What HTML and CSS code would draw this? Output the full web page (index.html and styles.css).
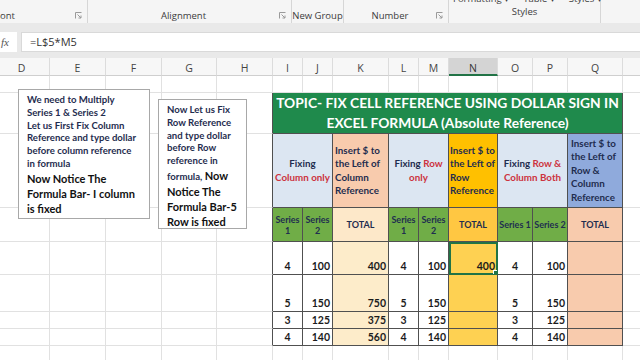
FILE: index.html
```html
<!DOCTYPE html>
<html lang="en">
<head>
    <meta charset="UTF-8">
    <title>Fix Cell Reference</title>
    <link rel="stylesheet" href="styles.css">
</head>
<body>
    <div class="ribbon">
        <div class="grp g-font"><span class="lbl left">ont</span><svg class="launch" viewBox="0 0 7 7"><path d="M0.5 6.5V0.5H6.5M2.5 2.5L6 6M6 3.5V6H3.5"/></svg></div>
        <div class="grp g-align"><span class="lbl">Alignment</span><svg class="launch" viewBox="0 0 7 7"><path d="M0.5 6.5V0.5H6.5M2.5 2.5L6 6M6 3.5V6H3.5"/></svg></div>
        <div class="grp g-new"><span class="lbl">New Group</span></div>
        <div class="grp g-num"><span class="lbl">Number</span><svg class="launch" viewBox="0 0 7 7"><path d="M0.5 6.5V0.5H6.5M2.5 2.5L6 6M6 3.5V6H3.5"/></svg></div>
        <div class="grp g-styles">
            <div class="peek"><span>Formatting ▾</span><span>Table ▾</span><span>Styles ▾</span></div>
            <span class="lbl">Styles</span>
        </div>
        <div class="grp g-last"></div>
    </div>

    <div class="fbar">
        <div class="fx">fx</div>
        <div class="finput">=L$5*M5</div>
    </div>

    <div class="sheet">
        <table class="grid">
            <colgroup>
                <col class="w56"><col class="w56"><col class="w56"><col class="w55"><col class="w56">
                <col class="w30"><col class="w30"><col class="w56"><col class="w30"><col class="w30">
                <col class="w49"><col class="w35"><col class="w35"><col class="w55"><col class="w40">
            </colgroup>
            <tr class="r-head">
                <th>D</th><th>E</th><th>F</th><th>G</th><th>H</th>
                <th>I</th><th>J</th><th>K</th><th>L</th><th>M</th>
                <th class="sel">N</th><th>O</th><th>P</th><th>Q</th><th></th>
            </tr>
            <tr class="r17">
                <td></td><td></td><td></td><td></td><td></td>
                <td></td><td></td><td></td><td></td><td></td>
                <td></td><td></td><td></td><td></td><td></td>
            </tr>
            <tr class="r-title">
                <td></td><td></td><td></td><td></td><td class="edge"></td>
                <td class="t title" colspan="9">TOPIC- FIX CELL REFERENCE USING DOLLAR SIGN IN<br>EXCEL FORMULA (Absolute Reference)</td>
                <td></td>
            </tr>
            <tr class="r-desc">
                <td></td><td></td><td></td><td></td><td class="edge"></td>
                <td class="t sky center" colspan="2">Fixing<br><span class="red">Column only</span></td>
                <td class="t peach">Insert $ to<br>the Left of<br>Column<br>Reference</td>
                <td class="t sky center" colspan="2">Fixing <span class="red">Row</span><br><span class="red">only</span></td>
                <td class="t orange">Insert $ to<br>the Left of<br>Row<br>Reference</td>
                <td class="t sky center" colspan="2">Fixing <span class="red">Row &amp;</span><br><span class="red">Column Both</span></td>
                <td class="t lav">Insert $ to<br>the Left of<br>Row &amp;<br>Column<br>Reference</td>
                <td></td>
            </tr>
            <tr class="r-sub">
                <td></td><td></td><td></td><td></td><td class="edge"></td>
                <td class="t leaf">Series<br>1</td><td class="t leaf">Series<br>2</td>
                <td class="t cream">TOTAL</td>
                <td class="t leaf">Series<br>1</td><td class="t leaf">Series<br>2</td>
                <td class="t amber">TOTAL</td>
                <td class="t leaf">Series 1</td><td class="t leaf">Series 2</td>
                <td class="t salmon">TOTAL</td>
                <td></td>
            </tr>
            <tr class="r33 num">
                <td></td><td></td><td></td><td></td><td class="edge"></td>
                <td class="t mid">4</td><td class="t">100</td><td class="t cream2">400</td>
                <td class="t mid">4</td><td class="t">100</td><td class="t amber2 active">400</td>
                <td class="t mid">4</td><td class="t">100</td><td class="t salmon"></td>
                <td></td>
            </tr>
            <tr class="r37 num">
                <td></td><td></td><td></td><td></td><td class="edge"></td>
                <td class="t mid">5</td><td class="t">150</td><td class="t cream2">750</td>
                <td class="t mid">5</td><td class="t">150</td><td class="t amber2"></td>
                <td class="t mid">5</td><td class="t">150</td><td class="t salmon"></td>
                <td></td>
            </tr>
            <tr class="r17 num">
                <td></td><td></td><td></td><td></td><td class="edge"></td>
                <td class="t mid">3</td><td class="t">125</td><td class="t cream2">375</td>
                <td class="t mid">3</td><td class="t">125</td><td class="t amber2"></td>
                <td class="t mid">3</td><td class="t">125</td><td class="t salmon"></td>
                <td></td>
            </tr>
            <tr class="r17 num">
                <td></td><td></td><td></td><td></td><td class="edge"></td>
                <td class="t mid">4</td><td class="t">140</td><td class="t cream2">560</td>
                <td class="t mid">4</td><td class="t">140</td><td class="t amber2"></td>
                <td class="t mid">4</td><td class="t">140</td><td class="t salmon"></td>
                <td></td>
            </tr>
            <tr class="r17">
                <td></td><td></td><td></td><td></td><td></td>
                <td></td><td></td><td></td><td></td><td></td>
                <td></td><td></td><td></td><td></td><td></td>
            </tr>
        </table>

        <div class="note note1">
            <p class="small">We need to Multiply<br>Series 1 &amp; Series 2<br>Let us First Fix Column<br>Reference and type dollar<br>before column reference<br>in formula</p>
            <p class="big">Now Notice The<br>Formula Bar- I column<br>is fixed</p>
        </div>
        <div class="note note2">
            <p class="small">Now Let us Fix<br>Row Reference<br>and type dollar<br>before Row<br>reference in<br>formula, <span class="big">Now</span></p>
            <p class="big">Notice The<br>Formula Bar-5<br>Row is fixed</p>
        </div>
    </div>
</body>
</html>
```

FILE: styles.css
```css
*{margin: 0;padding: 0;box-sizing: border-box;}
body {
    width: 640px;
    height: 360px;
    overflow: hidden;
    background: #fff;
    font-family: Lato, "Liberation Sans", sans-serif;
}

/* ribbon */
.ribbon {
    height: 23px;
    background: #f5f5f5;
    display: flex;
    overflow: hidden;
    font-family: "Open Sans", "Liberation Sans", sans-serif;
    font-size: 9.5px;
    color: #3c3c3c;
}
.grp {
    height: 23px;
    display: flex;
    align-items: flex-end;
    padding-bottom: 1px;
    border-right: 1px solid #d6d6d6;
}
.g-font { width: 88px; }
.g-align { width: 204px; }
.g-new { width: 52px; }
.g-num { width: 105px; }
.g-styles { width: 152px; flex-direction: column; align-items: stretch; justify-content: space-between; }
.g-last { flex: 1; border-right: none; }
.lbl {
    flex: 1;
    text-align: center;
    white-space: nowrap;
}
.lbl.left { text-align: left; }
.launch {
    width: 7px;
    height: 7px;
    margin: 0 5px 3px 0;
    fill: none;
    stroke: #9a9a9a;
    stroke-width: 1;
}
.peek {
    margin-top: -8px;
    padding-left: 4px;
    display: flex;
    gap: 14px;
    white-space: nowrap;
}

/* formula bar */
.fbar {
    height: 35px;
    background: #e9e9e9;
    padding: 9px 0 6px;
    display: flex;
    gap: 4px;
}
.fx {
    width: 17px;
    background: #fff;
    font-family: "Liberation Serif", serif;
    font-style: italic;
    font-size: 11px;
    color: #555;
    line-height: 20px;
    padding-left: 1px;
}
.finput {
    flex: 1;
    background: #fff;
    border: 1px solid #d9d9d9;
    border-right: none;
    padding-left: 8px;
    font-family: "Open Sans", "Liberation Sans", sans-serif;
    font-size: 11px;
    line-height: 18px;
    color: #333;
}

/* sheet */
.sheet {
    position: relative;
    height: 302px;
    overflow: hidden;
}
.grid {
    table-layout: fixed;
    border-collapse: separate;
    border-spacing: 0;
    width: 646px;
    margin-left: -6px;
}
.w56 { width: 56px; }
.w55 { width: 55px; }
.w30 { width: 30px; }
.w49 { width: 49px; }
.w35 { width: 35px; }
.w40 { width: 40px; }

.grid th {
    height: 18px;
    background: #f7f7f7;
    border-right: 1px solid #dcdcdc;
    border-bottom: 1px solid #cfcfcf;
    font-family: "Open Sans", "Liberation Sans", sans-serif;
    font-weight: normal;
    font-size: 10.5px;
    line-height: 12px;
    color: #444;
    padding-top: 4px;
    vertical-align: top;
}
.grid th.sel {
    background: #d4d4d4;
    border-bottom: 2px solid #217346;
    color: #333;
}
.grid td {
    border-right: 1px solid #e1e1e1;
    border-bottom: 1px solid #e1e1e1;
    padding: 0;
    white-space: nowrap;
    overflow: hidden;
}
.r17 { height: 17px; }
.r-title { height: 40px; }
.r-desc { height: 74px; }
.r-sub { height: 34px; }
.r33 { height: 33px; }
.r37 { height: 37px; }

.grid td.edge { border-right-color: #505050; }
.grid td.t {
    border-right: 1px solid #505050;
    border-bottom: 1px solid #505050;
    font-weight: 700;
    color: #1f2d4f;
    font-size: 9.8px;
    line-height: 13.5px;
    vertical-align: middle;
}
.grid td.title {
    background: #1f8a4c;
    color: #fff;
    font-weight: 700;
    font-size: 13.8px;
    line-height: 20px;
    text-align: center;
}
.sky { background: #dce6f2; }
.peach { background: #f8cbad; padding-left: 2px !important; }
.orange { background: #ffc000; padding-left: 1px !important; }
.lav { background: #8faadc; padding-left: 3px !important; }
.center { text-align: center; }
.red { color: #cc3340; }

.r-sub td.t { text-align: center; line-height: 11px; font-size: 9px; }
.leaf { background: #70ad47; }
.cream { background: #fde8c9; }
.amber { background: #ffc742; }
.salmon { background: #f8cbad; }
.cream2 { background: #fdecca; }
.amber2 { background: #fed152; }

.num td.t {
    font-size: 10.5px;
    color: #1b1b1b;
    vertical-align: bottom;
    text-align: right;
    padding: 0 2px 1px 0;
    line-height: 14px;
}
.num td.mid { text-align: center; padding-right: 0; }
.num td.active {
    position: relative;
    outline: 2px solid #217346;
    outline-offset: -2px;
}
.num td.active::after {
    content: "";
    position: absolute;
    right: -3px;
    bottom: -3px;
    width: 5px;
    height: 5px;
    background: #217346;
    border: 1px solid #fff;
}

/* text boxes over the sheet */
.note {
    position: absolute;
    background: #fff;
    border: 1px solid #a8a8a8;
    color: #1f2d4f;
    font-weight: 700;
    white-space: nowrap;
}
.note1 {
    left: 18px;
    top: 31px;
    width: 132px;
    height: 130px;
    padding: 4px 0 0 8px;
}
.note2 {
    left: 158px;
    top: 41px;
    width: 89px;
    height: 130px;
    padding: 4px 0 0 8px;
}
.small {
    font-size: 9.6px;
    line-height: 12.8px;
}
.big {
    font-size: 11px;
    line-height: 15px;
    color: #111;
    font-weight: 700;
}
```
